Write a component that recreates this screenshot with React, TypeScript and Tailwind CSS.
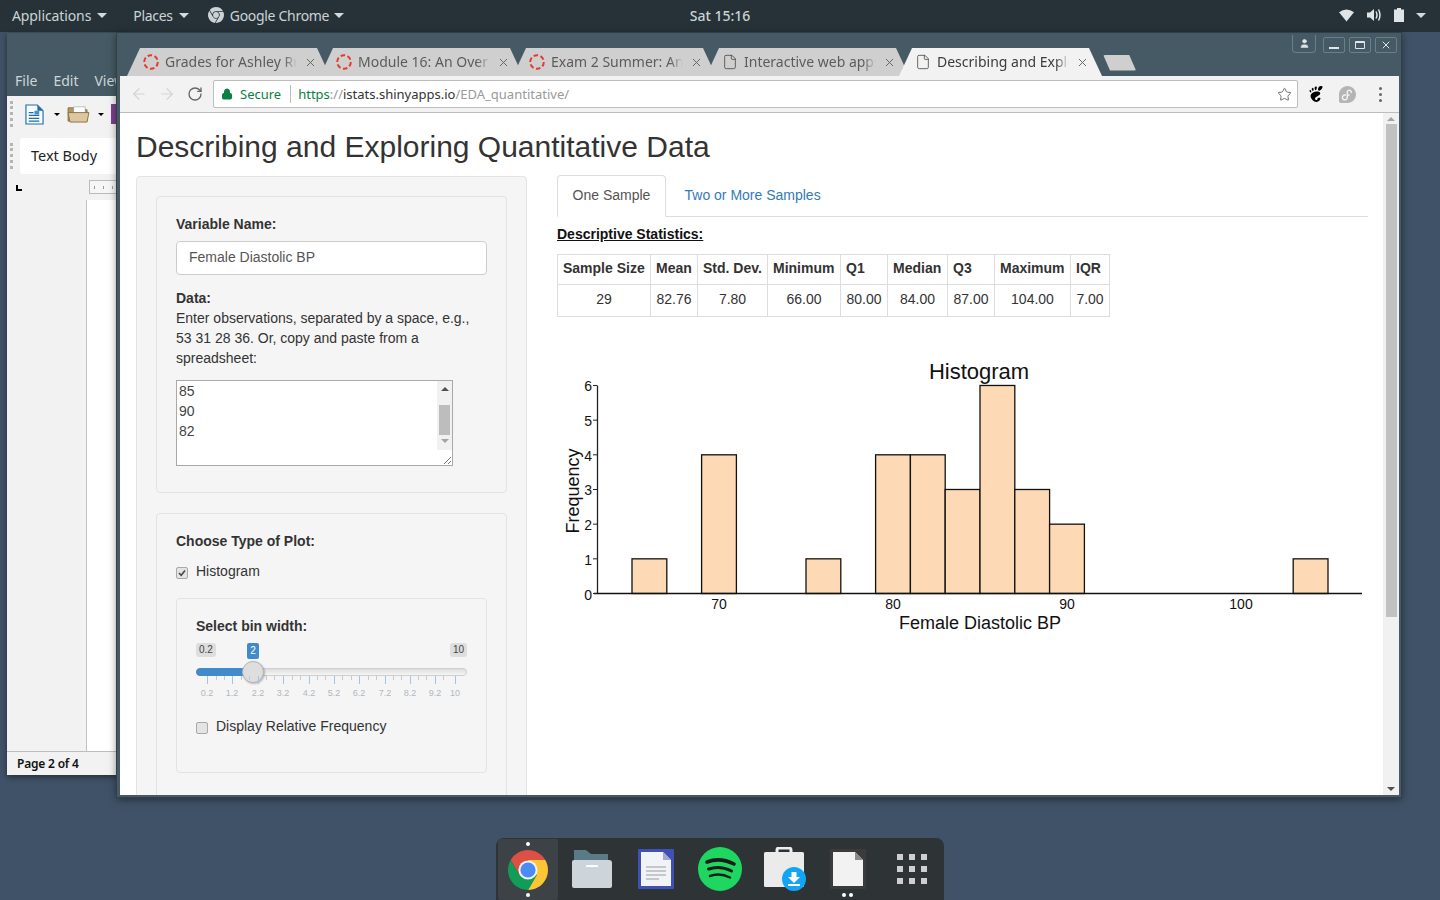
import { ArrowLeft, ArrowRight, RotateCw, Lock, Star, File as FileIcon, X, User } from "lucide-react";
import { SiGnome, SiFedora, SiGooglechrome } from "react-icons/si";

const tabs = [
  { title: "Grades for Ashley Ru", kind: "canvas" },
  { title: "Module 16: An Over", kind: "canvas" },
  { title: "Exam 2 Summer: An", kind: "canvas" },
  { title: "Interactive web apps", kind: "file" },
  { title: "Describing and Explo", kind: "file", active: true },
];

const bars = [
  { from: 65, count: 1 },
  { from: 69, count: 4 },
  { from: 75, count: 1 },
  { from: 79, count: 4 },
  { from: 81, count: 4 },
  { from: 83, count: 3 },
  { from: 85, count: 6 },
  { from: 87, count: 3 },
  { from: 89, count: 2 },
  { from: 103, count: 1 },
];

const stats = [
  ["Sample Size", "29", 93],
  ["Mean", "82.76", 47],
  ["Std. Dev.", "7.80", 70],
  ["Minimum", "66.00", 73],
  ["Q1", "80.00", 47],
  ["Median", "84.00", 60],
  ["Q3", "87.00", 47],
  ["Maximum", "104.00", 76],
  ["IQR", "7.00", 39],
];

const majorTicks = [
  [11, "0.2"],
  [36, "1.2"],
  [62, "2.2"],
  [87, "3.2"],
  [113, "4.2"],
  [138, "5.2"],
  [163, "6.2"],
  [189, "7.2"],
  [214, "8.2"],
  [239, "9.2"],
  [259, "10"],
] as const;
const minorTicks = [20, 28, 45, 53, 70, 78, 96, 104, 121, 129, 146, 155, 172, 180, 197, 205, 222, 230, 247];

function Caret({ className = "" }: { className?: string }) {
  return <span className={`inline-block w-0 h-0 border-x-[5px] border-x-transparent border-t-[5px] border-t-[#d3dadd] ${className}`} />;
}

function CanvasIcon() {
  return (
    <svg width="18" height="18" viewBox="0 0 18 18" className="shrink-0">
      <circle cx="9" cy="9" r="6.8" fill="none" stroke="#e53a2f" strokeWidth="2" strokeDasharray="4.6 2.5" />
    </svg>
  );
}

function Tab({ title, kind, active }: { title: string; kind: string; active?: boolean }) {
  return (
    <div
      className={`relative w-[205px] h-[28px] -mr-[12px] flex items-center pl-[15px] [clip-path:polygon(0_100%,13px_0,190px_0,203px_100%)] ${
        active ? "bg-[#f2f2f2] text-[#3c3c3c] z-10" : "bg-[#cfcfcf] text-[#5c5c5c]"
      }`}
    >
      {kind === "canvas" ? (
        <CanvasIcon />
      ) : (
        <FileIcon size={16} strokeWidth={1.2} className="shrink-0 mx-[1px] text-[#444]" />
      )}
      <span className="ml-[5px] -mt-[2px] w-[132px] overflow-hidden whitespace-nowrap text-[14px] [mask-image:linear-gradient(to_right,black_90%,transparent)]">
        {title}
      </span>
      <X size={13} strokeWidth={1.8} className="ml-[7px] shrink-0 text-[#666]" />
    </div>
  );
}

function ChromeLogo() {
  return (
    <svg width="40" height="40" viewBox="0 0 40 40">
      <path d="M2.7 10A20 20 0 0 1 37.3 10L20 10L11.3 25Z" fill="#dd5144" />
      <path d="M37.3 10A20 20 0 0 1 20 40L28.7 25L20 10Z" fill="#fbc534" />
      <path d="M20 40A20 20 0 0 1 2.7 10L11.3 25L28.7 25Z" fill="#109d58" />
      <circle cx="20" cy="20" r="9.6" fill="#f1f1f1" />
      <circle cx="20" cy="20" r="7.6" fill="#4b8bf5" />
    </svg>
  );
}

function Dock() {
  return (
    <div className="absolute left-[496px] bottom-0 w-[448px] h-[62px] rounded-t-[8px] bg-[#2e3436] grid grid-cols-7">
      <div className="relative mx-[2px] mt-[1px] bg-[#3c4245] rounded-[2px] flex items-center justify-center">
        <ChromeLogo />
        <span className="absolute top-[3px] w-[4px] h-[4px] rounded-full bg-white" />
        <span className="absolute bottom-[3px] w-[4px] h-[4px] rounded-full bg-white" />
      </div>
      <div className="flex items-center justify-center">
        <svg width="40" height="38" viewBox="0 0 40 38">
          <path d="M2 0H14L19 4H36V14H2Z" fill="#5a7a88" />
          <path d="M2 10H37A3 3 0 0 1 40 13V36A2 2 0 0 1 38 38H2A2 2 0 0 1 0 36V12A2 2 0 0 1 2 10Z" fill="#cdd5da" />
          <rect x="14" y="15" width="12" height="2" fill="#fff" />
        </svg>
      </div>
      <div className="flex items-center justify-center">
        <svg width="36" height="40" viewBox="0 0 36 40">
          <rect width="36" height="40" rx="1" fill="#3f51b5" />
          <path d="M3 3H25L33 11V37H3Z" fill="#f1f3f6" />
          <path d="M25 3L33 11H25Z" fill="#9fa8da" />
          <path d="M8 18H28M8 22H28M8 26H28M8 30H21" stroke="#c4c7cc" strokeWidth="2" />
        </svg>
      </div>
      <div className="flex items-center justify-center">
        <svg width="44" height="44" viewBox="0 0 44 44">
          <circle cx="22" cy="22" r="22" fill="#1ed760" />
          <path d="M9 15Q22 10 36 17" fill="none" stroke="#1a1a1a" strokeWidth="3.6" strokeLinecap="round" />
          <path d="M10.500 22Q22 18 33.500 24" fill="none" stroke="#1a1a1a" strokeWidth="3" strokeLinecap="round" />
          <path d="M12 29Q22 25.500 32 30.500" fill="none" stroke="#1a1a1a" strokeWidth="2.500" strokeLinecap="round" />
        </svg>
      </div>
      <div className="flex items-center justify-center">
        <svg width="44" height="44" viewBox="0 0 44 44" className="-ml-[1px]">
          <path d="M15 6V3A2 2 0 0 1 17 1H27A2 2 0 0 1 29 3V6" fill="none" stroke="#eeeeee" strokeWidth="3" />
          <rect x="2" y="5" width="40" height="35" rx="1.500" fill="#ebebeb" />
          <circle cx="32" cy="32" r="12" fill="#12a5f4" />
          <path d="M29.500 25H34.500V30H38L32 36L26 30H29.500ZM26 37H38V39H26Z" fill="#fff" />
        </svg>
      </div>
      <div className="relative flex items-center justify-center">
        <svg width="36" height="40" viewBox="0 0 36 40">
          <rect width="36" height="40" rx="1" fill="#3b3b3b" />
          <path d="M3 3H25L33 11V37H3Z" fill="#f2f2f2" />
          <path d="M25 3L33 11H25Z" fill="#8a8a8a" />
        </svg>
        <span className="absolute bottom-[3px] left-[26px] flex gap-[3px]">
          <span className="w-[4px] h-[4px] rounded-full bg-white" />
          <span className="w-[4px] h-[4px] rounded-full bg-white" />
        </span>
      </div>
      <div className="flex items-center justify-center">
        <div className="grid grid-cols-3 gap-x-[6px] gap-y-[6px]">
          {Array.from({ length: 9 }).map((_, i) => (
            <span key={i} className="w-[6px] h-[6px] bg-[#cfcfcf]" />
          ))}
        </div>
      </div>
    </div>
  );
}

function WriterWindow() {
  return (
    <div className="absolute left-[7px] top-[33px] w-[120px] h-[742px] flex flex-col bg-[#f2f2f2] shadow-[0_2px_6px_rgba(0,0,0,0.45)] font-['Noto_Sans',sans-serif]">
      <div className="h-[63px] bg-[#455a64] flex items-end gap-[16px] pl-[8px] pb-[5px] text-[14px] text-[#cdd6da] overflow-hidden whitespace-nowrap">
        <span>File</span>
        <span>Edit</span>
        <span>View</span>
      </div>
      <div className="h-[36px] flex items-center pl-[3px] overflow-hidden">
        <div className="w-[3px] h-[26px] mr-[12px] border-l-[3px] border-dotted border-[#b5b5b5]" />
        <svg width="19" height="21" viewBox="0 0 20 22" className="shrink-0">
          <path d="M1 1H13L19 7V21H1Z" fill="#f7fbfe" stroke="#1f6ea5" strokeWidth="1.200" />
          <path d="M13 1L19 7H13Z" fill="#1f6ea5" />
          <path d="M4 9H9M4 12H15M4 15H15M4 18H15" stroke="#1f6ea5" strokeWidth="1.300" />
          <rect x="10" y="7" width="5" height="4" fill="#3f94cd" />
        </svg>
        <span className="ml-[10px] w-0 h-0 border-x-[3px] border-x-transparent border-t-[3px] border-t-black" />
        <svg width="23" height="18" viewBox="0 0 24 19" className="ml-[7px] shrink-0">
          <path d="M1 3H9L11 5H21V17H1Z" fill="#b39668" stroke="#8a7048" />
          <rect x="7" y="2" width="12" height="8" fill="#fff" stroke="#999" strokeWidth="0.600" />
          <path d="M1 8H23L21 18H3Z" fill="#dcc7a0" stroke="#8a7048" />
        </svg>
        <span className="ml-[8px] w-0 h-0 border-x-[3px] border-x-transparent border-t-[3px] border-t-black" />
        <span className="ml-[7px] w-[8px] h-[20px] shrink-0 bg-[#7b3f8c]" />
      </div>
      <div className="h-[42px] flex items-center pl-[3px] pt-[6px]">
        <div className="w-[3px] h-[26px] mr-[7px] border-l-[3px] border-dotted border-[#b5b5b5]" />
        <div className="h-[36px] flex-1 bg-white rounded-[3px] pl-[11px] flex items-center text-[14.5px] text-[#222]">
          Text Body
        </div>
      </div>
      <div className="h-[26px] flex items-start pl-[9px] pt-[11px]">
        <div className="w-[6px] h-[6px] border-l-[2px] border-b-[2px] border-black" />
        <div className="ml-[67px] -mt-[5px] h-[14px] flex-1 border border-[#bbb] bg-[#f6f6f6] flex items-center gap-[8px] pl-[4px]">
          <span className="w-px h-[3px] bg-[#999]" />
          <span className="w-px h-[3px] bg-[#999]" />
          <span className="w-px h-[3px] bg-[#999]" />
        </div>
      </div>
      <div className="flex-1 flex">
        <div className="w-[80px] border-r border-[#c4c4c4]" />
        <div className="flex-1 bg-white" />
      </div>
      <div className="h-[24px] border-t border-[#bdbdbd] flex items-center pl-[10px] text-[12px] tracking-[-0.2px] font-semibold text-[#111]">
        Page 2 of 4
      </div>
    </div>
  );
}

function Well({ children, className = "" }: { children: React.ReactNode; className?: string }) {
  return <div className={`bg-[#f5f5f5] border border-[#e3e3e3] rounded-[4px] p-[19px] ${className}`}>{children}</div>;
}

function Checkbox({ checked }: { checked?: boolean }) {
  return (
    <span className="w-[12px] h-[12px] rounded-[2px] border border-[#a9a9a9] bg-[#e4e4e4] flex items-center justify-center shrink-0">
      {checked && (
        <svg width="8" height="8" viewBox="0 0 8 8">
          <path d="M1 4L3.200 6.300L7 1.500" fill="none" stroke="#444" strokeWidth="1.500" />
        </svg>
      )}
    </span>
  );
}

function Slider() {
  return (
    <div className="relative w-[271px] h-[62px]">
      <div className="flex justify-between text-[10px] leading-[14px] text-[#444]">
        <span className="px-[3px] bg-[#dedede] rounded-[3px]">0.2</span>
        <span className="px-[3px] bg-[#dedede] rounded-[3px]">10</span>
      </div>
      <span className="absolute left-[51px] top-0 w-[12px] h-[16px] bg-[#428bca] text-white rounded-[2px] text-[10px] leading-[16px] text-center">
        2
      </span>
      <div className="mt-[11px] h-[8px] rounded-[4px] bg-gradient-to-b from-[#dddddd] to-[#f6f6f6] border border-[#cfcfcf]">
        <div className="h-full w-[58px] rounded-l-[4px] bg-[#428bca] -m-[1px] box-content border border-[#428bca]" />
      </div>
      <span className="absolute left-[46px] top-[18px] w-[22px] h-[22px] rounded-full bg-[#dedede] border border-[#b5b5b5] shadow-[1px_1px_2px_rgba(0,0,0,0.25)]" />
      <svg width="271" height="30" viewBox="0 0 271 30" className="absolute left-0 top-[33px] font-['Liberation_Sans',sans-serif]">
        {minorTicks.map((x) => (
          <line key={x} x1={x + 0.5} x2={x + 0.5} y1="0" y2="4" stroke="#c8c8c8" />
        ))}
        {majorTicks.map(([x, label]) => (
          <g key={label}>
            <line x1={x + 0.5} x2={x + 0.5} y1="0" y2="8" stroke="#a4c5e2" />
            <text x={x} y="20" textAnchor="middle" fontSize="9" fill="#b0b8bf">
              {label}
            </text>
          </g>
        ))}
      </svg>
    </div>
  );
}

function Sidebar() {
  return (
    <Well className="w-[391px] shrink-0">
      <Well>
        <div className="font-bold leading-[16px]">Variable Name:</div>
        <div className="mt-[9px] h-[34px] pb-[2px] bg-white border border-[#ccc] rounded-[4px] px-[12px] flex items-center text-[#555]">
          Female Diastolic BP
        </div>
        <div className="mt-[13px] font-bold leading-[20px]">Data:</div>
        <div className="leading-[20px]">
          Enter observations, separated by a space, e.g.,
          <br />
          53 31 28 36. Or, copy and paste from a
          <br />
          spreadsheet:
        </div>
        <div className="mt-[12px] w-[277px] h-[86px] bg-white border border-[#a9a9a9] flex">
          <div className="flex-1 pl-[2px] leading-[20px] text-[#444]">
            85
            <br />
            90
            <br />
            82
          </div>
          <div className="w-[15px] flex flex-col">
            <div className="h-[69px] bg-[#f1f1f1] flex flex-col items-center">
              <span className="mt-[6px] w-0 h-0 border-x-[4px] border-x-transparent border-b-[4px] border-b-[#505050]" />
              <span className="mt-[14px] w-[11px] h-[30px] shrink-0 bg-[#bdbdbd]" />
              <span className="mt-[4px] w-0 h-0 border-x-[4px] border-x-transparent border-t-[4px] border-t-[#a3a3a3]" />
            </div>
            <div className="flex-1 flex items-end justify-end">
              <svg width="9" height="9" viewBox="0 0 9 9">
                <path d="M1 8L8 1M5 8L8 5" stroke="#555" strokeWidth="0.800" />
              </svg>
            </div>
          </div>
        </div>
        <div className="h-[7px]" />
      </Well>
      <Well className="mt-[20px] h-[330px]">
        <div className="font-bold leading-[16px]">Choose Type of Plot:</div>
        <div className="mt-[15px] flex items-center gap-[8px] leading-[20px]">
          <Checkbox checked />
          <span className="-mt-[3px]">Histogram</span>
        </div>
        <Well className="mt-[17px]">
          <div className="font-bold leading-[16px]">Select bin width:</div>
          <div className="mt-[9px]">
            <Slider />
          </div>
          <div className="mt-[15px] flex items-center gap-[8px] leading-[20px] pb-[17px]">
            <Checkbox />
            <span className="-mt-[4px]">Display Relative Frequency</span>
          </div>
        </Well>
      </Well>
    </Well>
  );
}

function Histogram() {
  const sx = (v: number) => 162 + (v - 70) * 17.4;
  const sy = (c: number) => 236.500 - c * 34.67;
  return (
    <svg width="811" height="290" viewBox="0 0 811 290" className="block font-['Liberation_Sans',sans-serif]">
      <text x="422" y="22" textAnchor="middle" fontSize="22" fill="#111">
        Histogram
      </text>
      {bars.map((b) => (
        <rect
          key={b.from}
          x={sx(b.from)}
          y={sy(b.count)}
          width={34.8}
          height={34.67 * b.count}
          fill="#fdd9b5"
          stroke="#111"
          strokeWidth="1.300"
        />
      ))}
      <line x1="40.500" x2="40.500" y1={sy(6)} y2={sy(0)} stroke="#222" strokeWidth="1.300" />
      <line x1="37" x2="805" y1={sy(0)} y2={sy(0)} stroke="#111" strokeWidth="1.300" />
      {[0, 1, 2, 3, 4, 5, 6].map((c) => (
        <g key={c}>
          <line x1="36" x2="40" y1={sy(c)} y2={sy(c)} stroke="#222" />
          <text x="35" y={sy(c) + 6} textAnchor="end" fontSize="14" fill="#111">
            {c}
          </text>
        </g>
      ))}
      {[70, 80, 90, 100].map((v) => (
        <text key={v} x={sx(v)} y="252" textAnchor="middle" fontSize="14" fill="#111">
          {v}
        </text>
      ))}
      <text x="423" y="272" textAnchor="middle" fontSize="18" fill="#111">
        Female Diastolic BP
      </text>
      <text transform="translate(22 134) rotate(-90)" textAnchor="middle" fontSize="18" fill="#111">
        Frequency
      </text>
    </svg>
  );
}

function MainPanel() {
  return (
    <div className="w-[811px] shrink-0 ml-[30px] -mt-[1px]">
      <div className="h-[42px] border-b border-[#ddd] flex">
        <div className="h-[42px] w-[109px] pb-[2px] border border-[#ddd] border-b-white bg-white rounded-t-[4px] flex items-center justify-center text-[#555]">
          One Sample
        </div>
        <div className="ml-[4px] px-[14.500px] h-[41px] flex items-center text-[#337ab7]">Two or More Samples</div>
      </div>
      <div className="mt-[7px] font-bold underline leading-[20px] text-[#111]">Descriptive Statistics:</div>
      <table className="mt-[10px] table-fixed border-collapse w-[553px]">
        <colgroup>
          {stats.map(([name, , w]) => (
            <col key={name} style={{ width: w as number }} />
          ))}
        </colgroup>
        <thead>
          <tr>
            {stats.map(([name]) => (
              <th key={name} className="border border-[#ddd] pl-[5px] pb-[3px] h-[30px] text-left font-bold whitespace-nowrap">
                {name}
              </th>
            ))}
          </tr>
        </thead>
        <tbody>
          <tr>
            {stats.map(([name, value]) => (
              <td key={name} className="border border-[#ddd] pb-[3px] h-[32px] text-center whitespace-nowrap">
                {value}
              </td>
            ))}
          </tr>
        </tbody>
      </table>
      <div className="mt-[40px]">
        <Histogram />
      </div>
    </div>
  );
}

function ChromeWindow() {
  return (
    <div className="absolute left-[117px] top-[33px] w-[1284px] h-[764px] flex flex-col bg-[#455a64] border-l-[3px] border-r-[2px] border-t border-b-2 border-[#465a65] shadow-[0_0_0_1px_#333f46,0_2px_8px_rgba(0,0,0,0.5)]">
      <div className="absolute right-[2px] top-[1px] flex items-start text-[#dfe5e8]">
        <div className="w-[24px] h-[18px] mr-[7px] border border-t-0 border-[#66808c] rounded-b-[4px] flex items-center justify-center">
          <User size={11} fill="currentColor" strokeWidth={1.500} />
        </div>
        <div className="w-[22px] h-[16px] mt-[2px] mr-[4px] border border-[#66808c] rounded-[2px] flex items-end justify-center pb-[3px]">
          <span className="w-[10px] h-[2px] bg-[#dfe5e8]" />
        </div>
        <div className="w-[22px] h-[16px] mt-[2px] mr-[4px] border border-[#66808c] rounded-[2px] flex items-center justify-center">
          <span className="w-[10px] h-[8px] border border-t-2 border-[#dfe5e8] rounded-[1px]" />
        </div>
        <div className="w-[22px] h-[16px] mt-[2px] border border-[#66808c] rounded-[2px] flex items-center justify-center">
          <X size={12} strokeWidth={2} />
        </div>
      </div>
      <div className="h-[28px] mt-[14px] ml-[7px] flex items-center font-['Noto_Sans',sans-serif]">
        {tabs.map((t) => (
          <Tab key={t.title} title={t.title} kind={t.kind} active={t.active} />
        ))}
        <div className="ml-[11px] w-[33px] h-[16px] mt-[1px] bg-[#cfcfcf] rounded-[2px] shrink-0 [clip-path:polygon(0_0,26px_0,100%_100%,7px_100%)]" />
      </div>
      <div className="h-[37px] bg-[#f2f2f2] border-b border-[#bdbdbd] flex items-center font-['Noto_Sans',sans-serif]">
        <ArrowLeft size={18} strokeWidth={1.500} className="ml-[10px] text-[#d4d4d4]" />
        <ArrowRight size={18} strokeWidth={1.500} className="ml-[10px] text-[#d4d4d4]" />
        <RotateCw size={16} strokeWidth={2} className="ml-[11px] text-[#666]" />
        <div className="ml-[10px] w-[1085px] h-[28px] bg-white border border-[#bdbdbd] rounded-[2px] flex items-center text-[13px]">
          <Lock size={12} className="ml-[7px] text-[#0b8043]" fill="currentColor" strokeWidth={2} />
          <span className="ml-[7px] mt-[1px] text-[#0b8043]">Secure</span>
          <span className="ml-[9px] w-px h-[18px] bg-[#bdbdbd]" />
          <span className="ml-[7px] mt-[1px] whitespace-nowrap">
            <span className="text-[#0b8043]">https</span>
            <span className="text-[#999]">://</span>
            <span className="text-[#333]">istats.shinyapps.io</span>
            <span className="text-[#999]">/EDA_quantitative/</span>
          </span>
          <Star size={15} strokeWidth={1.500} className="ml-auto mr-[5px] text-[#666]" />
        </div>
        <SiGnome size={16} className="ml-[10px] text-black" />
        <SiFedora size={17} className="ml-[15px] text-[#b4b4b4]" />
        <div className="ml-[23px] flex flex-col gap-[3px]">
          <span className="w-[3px] h-[3px] rounded-full bg-[#666]" />
          <span className="w-[3px] h-[3px] rounded-full bg-[#666]" />
          <span className="w-[3px] h-[3px] rounded-full bg-[#666]" />
        </div>
      </div>
      <div className="flex-1 min-h-0 bg-white flex font-['Liberation_Sans',sans-serif] text-[14px] text-[#333]">
        <div className="flex-1 overflow-hidden pl-[16px]">
          <h1 className="mt-[17px] text-[30px] leading-[33px] text-[#333]">Describing and Exploring Quantitative Data</h1>
          <div className="mt-[13px] flex">
            <Sidebar />
            <MainPanel />
          </div>
        </div>
        <div className="w-[16px] bg-[#f1f1f1] flex flex-col items-center">
          <span className="mt-[4px] w-0 h-0 border-x-[4px] border-x-transparent border-b-[4px] border-b-[#a3a3a3]" />
          <span className="mt-[3px] w-[11px] h-[493px] shrink-0 bg-[#c1c1c1]" />
          <span className="mt-auto mb-[4px] w-0 h-0 border-x-[4px] border-x-transparent border-t-[4px] border-t-[#505050]" />
        </div>
      </div>
    </div>
  );
}

export default function App() {
  return (
    <div className="relative w-[1440px] h-[900px] overflow-hidden bg-[#3f5267]">
      <div className="relative h-[32px] pb-[2px] bg-[#263238] flex items-center pl-[12px] pr-[14px] text-[14px] text-[#ccd3d6] font-['Noto_Sans',sans-serif]">
        <span className="tracking-[-0.1px]">Applications</span>
        <Caret className="ml-[6px]" />
        <span className="ml-[26px] tracking-[-0.3px]">Places</span>
        <Caret className="ml-[6px]" />
        <SiGooglechrome size={16} className="ml-[19px] text-[#ccd3d6]" />
        <span className="ml-[6px] tracking-[-0.3px]">Google Chrome</span>
        <Caret className="ml-[5px]" />
        <span className="absolute left-0 right-0 text-center pointer-events-none font-medium">Sat 15:16</span>
        <div className="ml-auto flex items-center text-[#dfe4e6]">
          <svg width="15" height="14" viewBox="0 0 16 14">
            <path d="M0 4Q8 -2 16 4L8 14Z" fill="currentColor" />
          </svg>
          <svg width="16" height="14" viewBox="0 0 16 14" className="ml-[12px]">
            <path d="M1 4.500H4L8 1V13L4 9.500H1Z" fill="currentColor" />
            <path d="M10 3.500Q12 7 10 10.500M12.500 1.500Q15.500 7 12.500 12.500" fill="none" stroke="currentColor" strokeWidth="1.500" />
          </svg>
          <svg width="10" height="14" viewBox="0 0 10 14" className="ml-[12px]">
            <path d="M3 0H7V1.500H10V14H0V1.500H3Z" fill="currentColor" />
          </svg>
          <Caret className="ml-[12px]" />
        </div>
      </div>
      <WriterWindow />
      <ChromeWindow />
      <Dock />
    </div>
  );
}
